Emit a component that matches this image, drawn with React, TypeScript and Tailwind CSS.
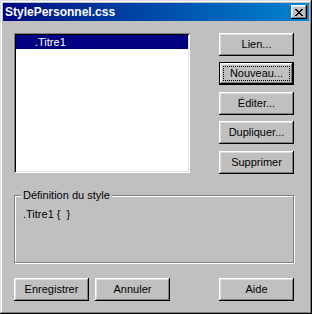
import React from 'react';

const raised =
  'shadow-[inset_-1px_-1px_0_#000,inset_1px_1px_0_#fff,inset_-2px_-2px_0_#808080,inset_2px_2px_0_#dfdfdf]';

const WinButton: React.FC<{ label: string; isDefault?: boolean; className?: string }> = ({
  label,
  isDefault,
  className = ''
}) => {
  if (isDefault) {
    return (
      <div className={`w-[75px] h-[23px] border border-black ${className}`}>
        <div className={`w-full h-full bg-[#c0c0c0] ${raised} p-[3px]`}>
          <div className="w-full h-full border border-dotted border-black flex items-center justify-center">
            {label}
          </div>
        </div>
      </div>
    );
  }
  return (
    <div
      className={`w-[75px] h-[23px] bg-[#c0c0c0] ${raised} flex items-center justify-center ${className}`}
    >
      {label}
    </div>
  );
};

const CloseGlyph = () => (
  <svg width="8" height="7" viewBox="0 0 8 7" shapeRendering="crispEdges">
    <path
      d="M0 0h2v1H0zM6 0h2v1H6zM1 1h2v1H1zM5 1h2v1H5zM2 2h4v1H2zM3 3h2v1H3zM2 4h4v1H2zM1 5h2v1H1zM5 5h2v1H5zM0 6h2v1H0zM6 6h2v1H6z"
      fill="#000"
    />
  </svg>
);

export default function App() {
  return (
    <div className="w-[312px] h-[314px] bg-[#c0c0c0] shadow-[inset_-1px_-1px_0_#000,inset_1px_1px_0_#dfdfdf,inset_-2px_-2px_0_#808080,inset_2px_2px_0_#fff] p-[3px] font-['Liberation_Sans',Arial,sans-serif] text-[11px] text-black leading-[13px] overflow-hidden">
      {/* title bar */}
      <div className="h-[18px] flex items-center justify-between bg-gradient-to-r from-[#000080] to-[#1084d0] pl-[2px] pr-[2px]">
        <span className="text-white font-bold text-[12px] leading-[14px]">StylePersonnel.css</span>
        <div className={`w-[16px] h-[14px] bg-[#c0c0c0] ${raised} flex items-center justify-center`}>
          <CloseGlyph />
        </div>
      </div>

      <div className="pl-[11px] pt-[12px]">
        <div className="flex">
          {/* list box */}
          <div className="w-[176px] h-[140px] bg-white shadow-[inset_1px_1px_0_#808080,inset_-1px_-1px_0_#fff,inset_2px_2px_0_#000,inset_-2px_-2px_0_#dfdfdf] p-[2px]">
            <div className="h-[14px] bg-[#000080] text-white pl-[19px] flex items-center">.Titre1</div>
          </div>

          {/* action buttons */}
          <div className="ml-[29px] flex flex-col">
            <WinButton label="Lien..." />
            <WinButton label="Nouveau..." isDefault className="mt-[6px]" />
            <WinButton label="Éditer..." className="mt-[7px]" />
            <WinButton label="Dupliquer..." className="mt-[6px]" />
            <WinButton label="Supprimer" className="mt-[7px]" />
          </div>
        </div>

        {/* group box */}
        <div className="relative mt-[21px] w-[280px] h-[68px] border border-[#808080] shadow-[1px_1px_0_#fff,inset_1px_1px_0_#fff] pl-[8px] pt-[12px]">
          <span className="absolute -top-[7px] left-[6px] px-[2px] bg-[#c0c0c0]">Définition du style</span>
          <div className="whitespace-pre">.Titre1 {'{  }'}</div>
        </div>

        {/* bottom buttons */}
        <div className="flex mt-[15px]">
          <WinButton label="Enregistrer" />
          <WinButton label="Annuler" className="ml-[6px]" />
          <WinButton label="Aide" className="ml-[49px]" />
        </div>
      </div>
    </div>
  );
}
